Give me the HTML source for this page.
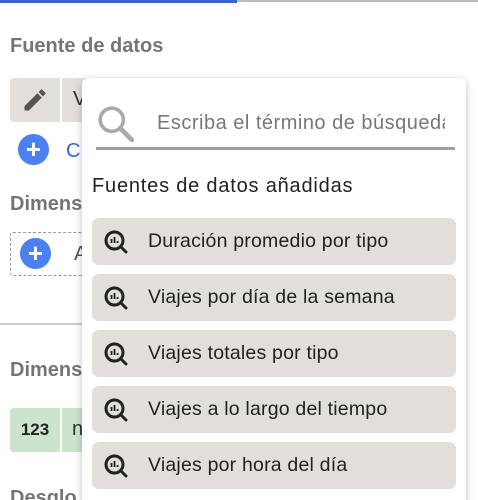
<!DOCTYPE html>
<html style="overflow:hidden;height:500px"><head><meta charset="utf-8"><style>
body{margin:0;width:478px;height:500px;overflow:hidden;background:#fff;font-family:"Liberation Sans",sans-serif;position:relative}
.a{position:absolute}
.h{color:#757575;font-weight:bold;font-size:20px}
.item{position:absolute;left:10px;width:364px;height:47px;background:#e2dfdb;border-radius:7px}
.item span{position:absolute;left:56px;top:12px;font-size:19.5px;letter-spacing:0.2px;color:#222;white-space:nowrap}
.item svg{position:absolute;left:11px;top:11px}
</style></head><body>
<div class="a" style="left:0;top:0;width:237px;height:3px;background:#3b64c8"></div>
<div class="a" style="left:237px;top:0;width:241px;height:2px;background:#bdbdbd"></div>
<div class="a h" style="left:10px;top:35px">Fuente de datos</div>
<div class="a" style="left:10px;top:78px;width:50px;height:44px;background:#e2dfdb;border-radius:4px 0 0 4px"></div>
<svg class="a" style="left:21px;top:86px" width="28" height="28" viewBox="0 0 24 24"><path d="M3 17.25V21h3.75L17.8 9.94l-3.75-3.75L3 17.25zM20.7 7.04a1 1 0 0 0 0-1.41l-2.34-2.34a1 1 0 0 0-1.41 0l-1.83 1.83 3.75 3.75 1.83-1.83z" fill="#555"/></svg>
<div class="a" style="left:62px;top:78px;width:30px;height:44px;background:#e2dfdb"></div>
<div class="a" style="left:73px;top:88px;font-size:20px;color:#333">V</div>
<div class="a" style="left:18px;top:134px;width:31px;height:31px;border-radius:50%;background:#4a80f0;color:#fff;font-size:26px;line-height:30px;text-align:center;font-weight:bold">+</div>
<div class="a" style="left:66px;top:140px;font-size:20px;color:#3b64c8">C</div>
<div class="a h" style="left:10px;top:193px">Dimensi</div>
<div class="a" style="left:10px;top:232px;width:90px;height:42px;border:1.5px dashed #999;border-radius:3px"></div>
<div class="a" style="left:20px;top:238px;width:31px;height:31px;border-radius:50%;background:#4a80f0;color:#fff;font-size:26px;line-height:30px;text-align:center;font-weight:bold">+</div>
<div class="a" style="left:74px;top:243px;font-size:20px;color:#555">A</div>
<div class="a" style="left:0;top:323px;width:90px;height:2px;background:#ccc"></div>
<div class="a h" style="left:10px;top:359px">Dimens</div>
<div class="a" style="left:10px;top:408px;width:50px;height:44px;background:#cde4cc;border-radius:4px 0 0 4px;font-weight:bold;font-size:17px;line-height:44px;text-align:center;color:#222">123</div>
<div class="a" style="left:62px;top:408px;width:30px;height:44px;background:#cde4cc"></div>
<div class="a" style="left:72px;top:418px;font-size:20px;color:#333">n</div>
<div class="a h" style="left:10px;top:487px">Desglo</div>

<div class="a" style="left:82px;top:78px;width:384px;height:440px;background:#fff;border-radius:6px;box-shadow:0 2px 8px rgba(0,0,0,.25)">
<svg class="a" style="left:14px;top:26px" width="40" height="40" viewBox="0 0 38 38"><circle cx="15" cy="15" r="11" fill="none" stroke="#aaa" stroke-width="3.5"/><path d="M23 23L34 34" stroke="#aaa" stroke-width="4.5" stroke-linecap="round"/></svg>
<div class="a" style="left:75px;top:34px;font-size:20px;letter-spacing:0.5px;color:#777;white-space:nowrap;width:288px;overflow:hidden">Escriba el término de búsqueda</div>
<div class="a" style="left:14px;top:69px;width:359px;height:3px;background:#9e9e9e"></div>
<div class="a" style="left:10px;top:97px;font-size:20px;letter-spacing:0.8px;color:#222">Fuentes de datos añadidas</div>
<div style="position:absolute;left:0;top:140px">
<div class="item" style="top:0"><svg width="26" height="26" viewBox="0 0 26 26"><circle cx="11.5" cy="11.5" r="8.5" fill="none" stroke="#222" stroke-width="3"/><path d="M17.5 17.5L23 23" stroke="#222" stroke-width="3" stroke-linecap="round"/><path d="M8.5 10v4M11.5 8v6M14.5 12v2" stroke="#222" stroke-width="1.8"/></svg><span>Duración promedio por tipo</span></div>
<div class="item" style="top:56px"><svg width="26" height="26" viewBox="0 0 26 26"><circle cx="11.5" cy="11.5" r="8.5" fill="none" stroke="#222" stroke-width="3"/><path d="M17.5 17.5L23 23" stroke="#222" stroke-width="3" stroke-linecap="round"/><path d="M8.5 10v4M11.5 8v6M14.5 12v2" stroke="#222" stroke-width="1.8"/></svg><span>Viajes por día de la semana</span></div>
<div class="item" style="top:112px"><svg width="26" height="26" viewBox="0 0 26 26"><circle cx="11.5" cy="11.5" r="8.5" fill="none" stroke="#222" stroke-width="3"/><path d="M17.5 17.5L23 23" stroke="#222" stroke-width="3" stroke-linecap="round"/><path d="M8.5 10v4M11.5 8v6M14.5 12v2" stroke="#222" stroke-width="1.8"/></svg><span>Viajes totales por tipo</span></div>
<div class="item" style="top:168px"><svg width="26" height="26" viewBox="0 0 26 26"><circle cx="11.5" cy="11.5" r="8.5" fill="none" stroke="#222" stroke-width="3"/><path d="M17.5 17.5L23 23" stroke="#222" stroke-width="3" stroke-linecap="round"/><path d="M8.5 10v4M11.5 8v6M14.5 12v2" stroke="#222" stroke-width="1.8"/></svg><span>Viajes a lo largo del tiempo</span></div>
<div class="item" style="top:224px"><svg width="26" height="26" viewBox="0 0 26 26"><circle cx="11.5" cy="11.5" r="8.5" fill="none" stroke="#222" stroke-width="3"/><path d="M17.5 17.5L23 23" stroke="#222" stroke-width="3" stroke-linecap="round"/><path d="M8.5 10v4M11.5 8v6M14.5 12v2" stroke="#222" stroke-width="1.8"/></svg><span>Viajes por hora del día</span></div>
</div>
</div>
</body></html>
